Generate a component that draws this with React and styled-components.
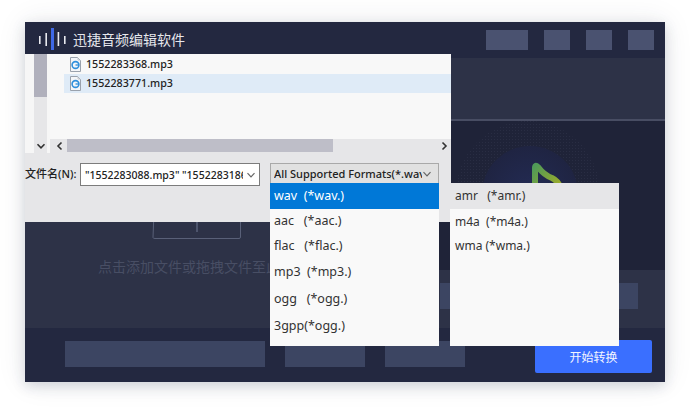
import React from "react";
import styled, { createGlobalStyle } from "styled-components";

const Global = createGlobalStyle`
  html, body { margin: 0; padding: 0; background: #fff; overflow: hidden; }
  body { font-family: "Noto Sans", "Noto Sans CJK SC", sans-serif; }
`;
const Page = styled.div`
  width: 690px; height: 410px; padding: 22px 25px; box-sizing: border-box;
`;
const Win = styled.div`
  position: relative; width: 640px; height: 360px; display: flex; flex-direction: column;
  background: #232840;
  box-shadow: 0 4px 12px rgba(40, 50, 80, .18), 0 0 28px rgba(40, 50, 80, .09);
`;
const TitleBar = styled.header`
  height: 36px; flex: none; display: flex; align-items: center; padding: 0 11px 0 13px; background: #232840;
`;
const TitleText = styled.span`
  margin: -2px 0 0 6px; color: #e6e7ec; font: 14px/20px "Noto Sans CJK SC", sans-serif;
`;
const TitleSpacer = styled.div`flex: 1;`;
const TitleButtons = styled.div`display: flex; gap: 16px; margin-top: 0;`;
const TitleButton = styled.div`
  width: ${p => p.$w}px; height: 20px; background: #4a5270;
`;
const Main = styled.div`display: flex; height: 270px; flex: none;`;
const LeftPanel = styled.section`
  width: 400px; box-sizing: border-box; padding: 121px 56px 0 0; background: #2d3247;
  display: flex; flex-direction: column; align-items: center;
`;
const Hint = styled.p`
  margin: 17px 0 0 -2px; color: #484e64; font: 14px/20px "Noto Sans CJK SC", sans-serif; white-space: nowrap;
`;
const RightPanel = styled.section`flex: 1; display: flex; flex-direction: column;`;
const RightHead = styled.div`height: 61px; flex: none; background: #2d3247; border-bottom: 2px solid #484d63;`;
const RightBody = styled.div`
  flex: 1; min-height: 0; background: #1f2338; padding-left: 30px; overflow: hidden;
`;
const RightFoot = styled.div`
  height: 58px; flex: none; background: #2d3247; padding: 13px 27px 0 15px; box-sizing: border-box;
`;
const FootBar = styled.div`height: 26px; background: #3c4562;`;
const Footer = styled.footer`
  flex: 1; display: flex; align-items: flex-start; padding: 13px 13px 0 40px; background: #232840;
`;
const FootBtn = styled.div`
  width: ${p => p.$w}px; height: 26px; margin-right: 20px; background: #3c4562;
`;
const StartBtn = styled.button`
  margin: -1px 0 0 auto; width: 117px; height: 33px; border: 0; border-radius: 2px; background: #3a6fff;
  color: #f2f5ff; font: 12px/33px "Noto Sans CJK SC", sans-serif; padding: 0;
`;

const Dialog = styled.div`
  position: absolute; left: 0; top: 32px; width: 426px; height: 168px; background: #e6e6e8;
  display: flex; flex-direction: column;
`;
const Browser = styled.div`display: flex; height: 99px; flex: none;`;
const TreeCol = styled.div`
  width: 25px; flex: none; box-sizing: border-box; padding: 0 3px 0 9px; background: #f6f6f6;
`;
const VScroll = styled.div`
  height: 100%; background: #e6e6e8; display: flex; flex-direction: column; justify-content: space-between; align-items: center;
`;
const VThumb = styled.div`width: 100%; height: 43px; background: #b0b0bc;`;
const ArrowCell = styled.div`height: 14px; display: flex; align-items: center; justify-content: center;`;
const FileCol = styled.div`flex: 1; display: flex; flex-direction: column; min-width: 0;`;
const FileList = styled.ul`
  flex: 1; margin: 0; padding: 0 0 0 14px; list-style: none; background: #f8f8f8;
`;
const FileRow = styled.li`
  height: ${p => p.$h}px; display: flex; align-items: center; padding: 0 0 ${p => (p.$sel ? 1 : 0)}px 6px;
  box-sizing: border-box;
  background: ${p => (p.$sel ? "#dfebf7" : "transparent")};
  color: #222; font: 500 10.7px/16px "Noto Sans", sans-serif;
  svg { margin-right: 5px; flex: none; }
`;
const HScroll = styled.div`
  height: 14px; flex: none; display: flex; align-items: center; margin-left: 2px; background: #e6e6e8;
`;
const HArrow = styled.div`
  width: ${p => p.$w}px; flex: none; height: 100%; display: flex; align-items: center; justify-content: center;
`;
const HThumb = styled.div`width: 266px; height: 13px; background: #bebec8; margin-top: -1px;`;
const HTrack = styled.div`flex: 1;`;
const FormRow = styled.div`display: flex; align-items: flex-start; padding-top: 10px;`;
const FieldLabel = styled.label`
  width: 55px; flex: none; color: #222; white-space: nowrap;
  font: 500 11px/22px "Noto Sans", "Noto Sans CJK SC", sans-serif;
`;
const NameInput = styled.div`
  width: 180px; height: 23px; box-sizing: border-box; flex: none; display: flex; align-items: center; gap: 3px;
  background: #fff; border: 1px solid #7c7c7c; padding: 0 2px 0 4px;
`;
const NameText = styled.span`
  width: 158px; overflow: hidden; white-space: nowrap; color: #222;
  font: 500 10.5px/20px "Noto Sans", sans-serif;
`;
const FormatSelect = styled.div`
  position: relative; margin-left: 10px; width: 169px; height: 20px; box-sizing: border-box; flex: none;
  display: flex; align-items: center; padding: 0 3px 0 3px;
  background: #e1e1e1; border: 1px solid #a9a9a9; border-bottom: 0;
`;
const FormatText = styled.span`
  width: 148px; overflow: hidden; white-space: nowrap; color: #222;
  font: 500 11px/20px "Noto Sans", sans-serif;
`;
const Menu = styled.ul`
  position: absolute; z-index: 3; margin: 0; padding: 0; list-style: none;
  left: ${p => p.$x}px; top: 161px; width: 169px; height: 163px; background: #f9f9f9;
`;
const MenuItem = styled.li`
  height: ${p => p.$h}px; display: flex; align-items: center; padding-left: ${p => p.$pad}px;
  box-sizing: border-box; white-space: pre;
  background: ${p => (p.$active ? "#0078d7" : p.$hover ? "#e6e6e8" : "transparent")};
  color: ${p => (p.$active ? "#fff" : "#333")};
  font: ${p => p.$size}px/18px "Noto Sans", sans-serif;
`;

const Chevron = ({ dir = "down", size = 10, color = "#555", w = 1.2 }) => {
  const d = {
    down: "M1.5 3.2 5 6.8 8.5 3.2",
    left: "M6.5 1.5 3 5 6.5 8.5",
    right: "M3.5 1.5 7 5 3.5 8.5",
  }[dir];
  return (
    <svg width={size} height={size} viewBox="0 0 10 10" fill="none">
      <path d={d} stroke={color} strokeWidth={w} />
    </svg>
  );
};

const Logo = () => (
  <svg width="29" height="24" viewBox="0 0 29 24">
    <rect x="1" y="8" width="1.6" height="8" fill="#e8e9ee" />
    <rect x="7.4" y="5" width="1.6" height="13" fill="#e8e9ee" />
    <rect x="13" y="0" width="3" height="22" fill="#3f69e6" />
    <rect x="19.6" y="4" width="1.6" height="14" fill="#e8e9ee" />
    <rect x="26" y="8" width="1.6" height="8" fill="#e8e9ee" />
  </svg>
);

const FileIcon = () => (
  <svg width="11" height="15" viewBox="0 0 11 15">
    <path d="M.5.5H7.5L10.5 3.5V14.5H.5Z" fill="#f4f6f9" stroke="#9aa2ad" />
    <circle cx="5.5" cy="8" r="3.4" fill="none" stroke="#2f8fdc" strokeWidth="1.6" />
    <path d="M5.5 8H9" stroke="#2f8fdc" strokeWidth="1.3" />
    <path d="M7 2H9V4" fill="none" stroke="#c4c9d0" />
  </svg>
);

const UploadIcon = () => (
  <svg width="90" height="60" viewBox="0 0 90 60" fill="none">
    <path d="M2.5 20 1 58.5Q1 59.5 3 59.5H87Q88.500 59.500 88.500 58V20" stroke="#596078" />
    <path d="M45 30V53" stroke="#596078" strokeWidth="1.500" />
  </svg>
);

const Note = () => (
  <svg width="146" height="146" viewBox="0 0 146 146" style={{ display: "block" }}>
    <defs>
      <pattern id="dots" width="3" height="3" patternUnits="userSpaceOnUse">
        <rect width="3" height="3" fill="#1f2338" />
        <rect width="1" height="1" fill="#292d43" />
      </pattern>
      <radialGradient id="core">
        <stop offset="0" stopColor="#232b54" />
        <stop offset="1" stopColor="#1f2442" />
      </radialGradient>
      <linearGradient id="noteGrad" x1="0" y1="0" x2="1" y2="1">
        <stop offset="0" stopColor="#4f9a58" />
        <stop offset="1" stopColor="#a9ae22" />
      </linearGradient>
    </defs>
    <circle cx="73" cy="72" r="72" fill="url(#dots)" />
    <circle cx="75" cy="73" r="48" fill="url(#core)" />
    <path d="M80 72V47Q80 43 83 46Q89 54 97 57Q103 60 105 66L105 72" fill="none" stroke="url(#noteGrad)" strokeWidth="6" strokeLinecap="round" />
  </svg>
);

const files = [
  { name: "1552283368.mp3", h: 20 },
  { name: "1552283771.mp3", h: 19, sel: true },
];
const leftFormats = [
  { t: "wav  (*wav.)", h: 26, active: true },
  { t: "aac   (*aac.)", h: 24 },
  { t: "flac   (*flac.)", h: 26 },
  { t: "mp3  (*mp3.)", h: 26 },
  { t: "ogg   (*ogg.)", h: 28 },
  { t: "3gpp(*ogg.)", h: 26 },
];
const rightFormats = [
  { t: "amr   (*amr.)", h: 26, hover: true },
  { t: "m4a  (*m4a.)", h: 25 },
  { t: "wma (*wma.)", h: 24 },
];

export default function App() {
  return (
    <Page>
      <Global />
      <Win>
        <TitleBar>
          <Logo />
          <TitleText>迅捷音频编辑软件</TitleText>
          <TitleSpacer />
          <TitleButtons>
            <TitleButton $w={42} />
            <TitleButton $w={26} />
            <TitleButton $w={26} />
            <TitleButton $w={26} />
          </TitleButtons>
        </TitleBar>
        <Main>
          <LeftPanel>
            <UploadIcon />
            <Hint>点击添加文件或拖拽文件至此处</Hint>
          </LeftPanel>
          <RightPanel>
            <RightHead />
            <RightBody><Note /></RightBody>
            <RightFoot><FootBar /></RightFoot>
          </RightPanel>
        </Main>
        <Footer>
          <FootBtn $w={200} />
          <FootBtn $w={80} />
          <FootBtn $w={80} />
          <StartBtn>开始转换</StartBtn>
        </Footer>

        <Dialog>
          <Browser>
            <TreeCol>
              <VScroll>
                <VThumb />
                <ArrowCell><Chevron dir="down" color="#333" w={1.6} /></ArrowCell>
              </VScroll>
            </TreeCol>
            <FileCol>
              <FileList>
                {files.map(f => (
                  <FileRow key={f.name} $h={f.h} $sel={f.sel}><FileIcon />{f.name}</FileRow>
                ))}
              </FileList>
              <HScroll>
                <HArrow $w={15}><Chevron dir="left" color="#333" w={1.6} /></HArrow>
                <HThumb />
                <HTrack />
                <HArrow $w={15}><Chevron dir="right" color="#333" w={1.6} /></HArrow>
              </HScroll>
            </FileCol>
          </Browser>
          <FormRow>
            <FieldLabel>文件名(N):</FieldLabel>
            <NameInput>
              <NameText>"1552283088.mp3" "1552283186.mp3"</NameText>
              <Chevron color="#666" />
            </NameInput>
            <FormatSelect>
              <FormatText>All Supported Formats(*.wav)</FormatText>
              <Chevron color="#666" />
            </FormatSelect>
          </FormRow>
        </Dialog>
        <Menu $x={245}>
          {leftFormats.map(f => (
            <MenuItem key={f.t} $h={f.h} $pad={4} $size={12.5} $active={f.active}>{f.t}</MenuItem>
          ))}
        </Menu>
        <Menu $x={425}>
          {rightFormats.map(f => (
            <MenuItem key={f.t} $h={f.h} $pad={5} $size={12} $hover={f.hover}>{f.t}</MenuItem>
          ))}
        </Menu>
      </Win>
    </Page>
  );
}
